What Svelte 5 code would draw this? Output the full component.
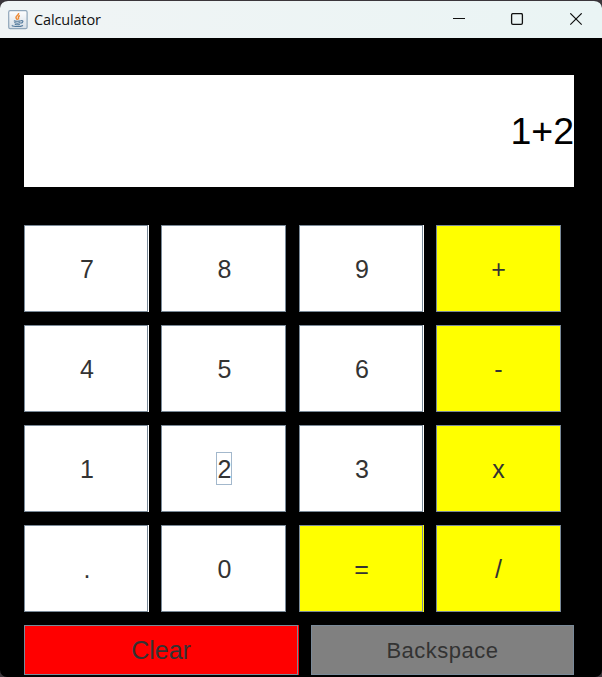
<script>
  const keys = ['7', '8', '9', '+', '4', '5', '6', '-', '1', '2', '3', 'x', '.', '0', '=', '/'];
  const operators = ['+', '-', 'x', '=', '/'];
  const focused = '2';
</script>

<div class="desktop">
  <main class="window">
    <header>
      <svg class="logo" width="20" height="20" viewBox="0 0 20 20">
        <defs>
          <linearGradient id="tile" x1="0" y1="0" x2="0" y2="1">
            <stop offset="0" stop-color="#ffffff" />
            <stop offset="1" stop-color="#d5dee6" />
          </linearGradient>
        </defs>
        <rect x=".7" y=".7" width="18.4" height="18" rx="1.5" fill="url(#tile)" stroke="#8fa6ba" stroke-width="1.2" />
        <path d="M10.6 3c.6 2-3.3 2.900-2.600 4.700.2.800 1.200 1.300 1.200 2.300M11.800 5.500c-2.500 1.200-1 2.200-1.300 4" fill="none" stroke="#ee8a35" stroke-width="1.500" />
        <path d="M5.800 10.700c1.500.700 5.500.700 7 0M6.300 12.600c1.700.8 4.300.8 6 0M6.800 14.200c1.500.7 3.500.7 5 0M12.900 10.800c3-.8 2.500 2-.5 2.500M4.500 15.200c-2 1.300 7 2.100 10.500.2" fill="none" stroke="#52799b" stroke-width="1.100" />
      </svg>
      <span class="title">Calculator</span>
      <svg class="controls" width="132" height="13" viewBox="0 0 132 13" fill="none" stroke="#111">
        <path d="M1 5.500h12" />
        <rect x="59.600" y=".600" width="10.800" height="10.800" rx="1.300" stroke-width="1.300" />
        <path d="M118.300 .300l11.400 11.400M129.700 .300l-11.400 11.400" stroke-width="1.150" />
      </svg>
    </header>

    <section class="body">
      <output>1+2</output>
      <div class="keys">
        {#each keys as key, i}
          <button class:operator={operators.includes(key)} class:strip={i % 4 === 0 || i % 4 === 2}>
            <span class:focused={key === focused}>{key}</span>
          </button>
        {/each}
      </div>
      <div class="actions">
        <button class="clear strip"><span>Clear</span></button>
        <button class="backspace"><span>Backspace</span></button>
      </div>
    </section>
  </main>
</div>

<style>
  .desktop {
    width: 602px;
    height: 677px;
    background: #3b363b;
    overflow: hidden;
  }
  .window {
    box-sizing: border-box;
    height: 677px;
    border-top: 1px solid #3b363b;
    border-radius: 8px 8px 7px 7px;
    background: #000;
    overflow: hidden;
    font-family: "Liberation Sans", Arial, sans-serif;
  }
  header {
    display: flex;
    align-items: center;
    box-sizing: border-box;
    height: 37px;
    padding: 0 18px 0 8px;
    background: linear-gradient(90deg, #f0f4f5, #eaf4f4);
  }
  .title {
    margin-left: 6px;
    font: 14.5px/20px "Open Sans", "Noto Sans", sans-serif;
    letter-spacing: -0.15px;
    color: #111;
  }
  .controls {
    margin-left: auto;
  }
  .body {
    padding: 37px 28px 0 24px;
  }
  output {
    display: block;
    height: 112px;
    background: #fff;
    color: #000;
    font-size: 37.5px;
    line-height: 112px;
    text-align: right;
  }
  .keys {
    display: grid;
    grid-template-columns: 137px 138px 137px 125px;
    grid-auto-rows: 87px;
    row-gap: 13px;
    margin-top: 38px;
  }
  button {
    display: flex;
    align-items: center;
    justify-content: center;
    box-sizing: border-box;
    width: 125px;
    height: 87px;
    margin: 0;
    padding: 0 0 0 2px;
    border: 1px solid #7a8a99;
    border-radius: 0;
    background: #fff;
    color: #333;
    font: 25px/29px "Liberation Sans", Arial, sans-serif;
  }
  .keys span {
    padding-top: 2px;
  }
  .strip {
    width: 124px;
    box-shadow: 1px 0 #fff;
  }
  .operator {
    padding-left: 0;
    background: #ff0;
  }
  .operator.strip {
    padding-left: 1px;
    box-shadow: 1px 0 #ff0;
  }
  .keys .focused {
    padding-left: 1px;
    margin-left: -1px;
    outline: 1px solid #a3b8cc;
  }
  .actions {
    display: flex;
    gap: 13px;
    margin-top: 13px;
  }
  .actions button {
    height: 50px;
  }
  .actions .clear {
    width: 274px;
    padding-left: 0;
    background: #f00;
    box-shadow: 1px 0 #f00;
  }
  .actions .backspace {
    width: 263px;
    padding-left: 0;
    background: #808080;
    font-size: 22px;
    letter-spacing: 0.5px;
  }
</style>
